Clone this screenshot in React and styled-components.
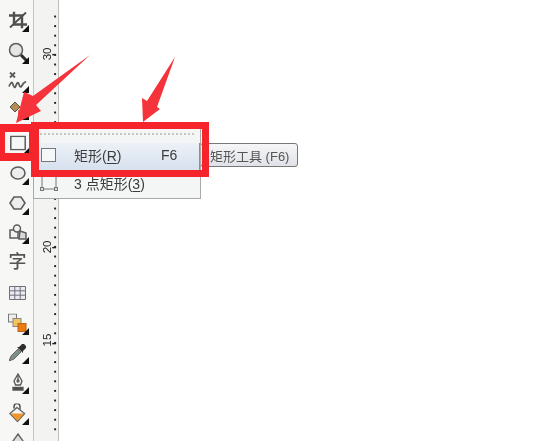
import React from 'react';
import styled, { createGlobalStyle } from 'styled-components';

const Global = createGlobalStyle`
  html, body { margin: 0; padding: 0; background: #fff; }
  body { font-family: "Liberation Sans", "Noto Sans CJK SC", sans-serif; }
`;

const Page = styled.div`
  position: relative;
  display: flex;
  width: 550px;
  height: 441px;
  overflow: hidden;
  background: #fff;
  filter: blur(0.4px);
`;

const Toolbar = styled.div`
  flex: 0 0 34px;
  height: 441px;
  padding-top: 20px;
  background: #f7f7f6;
  border-right: 1px solid #c4c4c4;
  box-sizing: border-box;
  overflow: hidden;
`;

const Tool = styled.div`
  position: relative;
  height: ${p => p.pitch}px;
  display: flex;
  align-items: flex-start;
  justify-content: center;
  padding-left: 2px;
  svg, span { display: block; transform: translateY(-50%); }
  ${p => p.more && `
    &::after {
      content: "";
      position: absolute;
      right: 4px;
      top: 5px;
      border-left: 7px solid transparent;
      border-bottom: 7px solid #111;
    }
  `}
`;

const Glyph = styled.span`
  font-size: 18px;
  font-weight: 500;
  line-height: 1;
  color: #555;
  font-family: "Noto Sans CJK SC", sans-serif;
`;

const Ruler = styled.svg`
  flex: 0 0 25px;
  width: 25px;
  height: 441px;
  box-sizing: border-box;
  background: #f3f3f2;
  border-right: 1px solid #bdbdbd;
`;

const Flyout = styled.div`
  position: absolute;
  left: 33px;
  top: 122px;
  width: 168px;
  height: 77px;
  box-sizing: border-box;
  padding-top: 10px;
  background: #f4f5f5;
  border: 1px solid #a9a9a9;
`;

const Dots = styled.div`
  height: 2px;
  margin: 0 6px 8px;
  background: repeating-linear-gradient(90deg, #c6c6c6 0 2px, transparent 2px 4px);
`;

const MenuRow = styled.div`
  display: flex;
  align-items: center;
  height: 27px;
  box-sizing: border-box;
  padding: 0 0 4px 6px;
  font-size: 14px;
  color: #3c3c3c;
  background: ${p => p.active ? 'linear-gradient(180deg, #edf1f7, #d6e1ee)' : 'transparent'};
  border-right: 1px solid ${p => p.active ? '#8b8f96' : 'transparent'};
  margin-bottom: 1px;
  svg { flex: none; margin-right: 16px; }
`;

const Label = styled.span`
  flex: 0 0 87px;
  white-space: nowrap;
  u { text-underline-offset: 2px; }
`;

const Shortcut = styled.span`
  font-size: 14px;
`;

const Tip = styled.div`
  position: absolute;
  left: 200px;
  top: 143px;
  width: 98px;
  height: 24px;
  box-sizing: border-box;
  padding-left: 9px;
  display: flex;
  align-items: center;
  font-size: 13px;
  color: #555;
  background: linear-gradient(180deg, #f6f6f7, #e0e2e8);
  border: 1px solid #777;
  border-radius: 3px;
  white-space: nowrap;
`;

const Frame = styled.div`
  position: absolute;
  left: ${p => p.x}px;
  top: ${p => p.y}px;
  width: ${p => p.w}px;
  height: ${p => p.ht}px;
  box-sizing: border-box;
  border: solid #f5252b;
  border-width: ${p => p.edge};
`;

const Arrows = styled.svg`
  position: absolute;
  left: 0;
  top: 0;
  pointer-events: none;
`;

const ink = '#5c5c5c';

const tools = [
  { pitch: 32, more: true, icon: <svg width="18" height="17" viewBox="0 0 18 17" fill="none" stroke="#505050" strokeWidth="2.400"><path d="M5 0v13h13M0 4h13v13" /><path d="M1 16L17 1" strokeWidth="1.800" /></svg> },
  { pitch: 29, more: true, icon: <svg width="20" height="20" viewBox="0 0 20 20" fill="none"><circle cx="8" cy="8" r="6.500" fill="#e6e6e6" stroke={ink} strokeWidth="1.500" /><path d="M13 13l6 6" stroke="#2c2c2c" strokeWidth="3" /></svg> },
  { pitch: 27, more: true, icon: <svg width="19" height="19" viewBox="0 0 19 19" fill="none" stroke={ink} strokeWidth="1.800"><path d="M2 1l5 5M7 1L2 6" /><path d="M1 15c2-5 3-5 4-2s2 4 3 1 2-4 3-1 2 3 3 1 2-3 4-4" /></svg> },
  { pitch: 35, more: true, icon: <svg width="18" height="18" viewBox="0 0 18 18"><path d="M1 8l5-5 5 5-5 5z" fill="#b58d4e" stroke="#555" /><rect x="9" y="11" width="6" height="6" fill="#e9675a" /></svg> },
  { pitch: 30, more: true, icon: <svg width="16" height="15" viewBox="0 0 16 15" fill="#f4f6f8" stroke={ink} strokeWidth="1.500"><rect x=".8" y=".8" width="14.400" height="13.400" /></svg> },
  { pitch: 30, more: true, icon: <svg width="16" height="14" viewBox="0 0 16 14" fill="#ededed" stroke={ink} strokeWidth="1.600"><ellipse cx="8" cy="7" rx="7" ry="6" /></svg> },
  { pitch: 29, more: true, icon: <svg width="17" height="14" viewBox="0 0 17 14" fill="#ededed" stroke={ink} strokeWidth="1.600"><path d="M5 1h7l4 6-4 6H5L1 7z" /></svg> },
  { pitch: 28, more: true, icon: <svg width="18" height="16" viewBox="0 0 18 16" fill="#f2f2f2" stroke={ink} strokeWidth="1.500"><rect x="1" y="6" width="8" height="8" /><circle cx="8" cy="4.500" r="3.500" /><path d="M11 7l6 2v6h-7z" fill="#d8d8d8" /></svg> },
  { pitch: 33, icon: <Glyph>字</Glyph> },
  { pitch: 30, icon: <svg width="17" height="14" viewBox="0 0 17 14" fill="#e9ebf0" stroke="#707078"><path d="M.5.500h16v13H.5zM.5 4.800h16M.5 9.200h16M5.800.500v13M11.200.500v13" /></svg> },
  { pitch: 29, more: true, icon: <svg width="19" height="19" viewBox="0 0 19 19"><rect x=".5" y=".5" width="8" height="8" fill="#eee" stroke="#777" /><rect x="5" y="5" width="8" height="8" fill="#f2c55c" stroke="#888" /><rect x="10" y="10" width="8" height="8" fill="#ee7a12" stroke="#b5651d" /></svg> },
  { pitch: 30, more: true, icon: <svg width="18" height="18" viewBox="0 0 18 18" fill="none"><path d="M0 18l2-5 7-7 3 3-7 7z" fill="#7d8f88" stroke="#666" /><path d="M8 4l2 0 3-3 2 0 2 2 0 2-3 3 0 2z" fill="#2e2e2e" /></svg> },
  { pitch: 31, more: true, icon: <svg width="12" height="18" viewBox="0 0 12 18" fill="#f5f5f5" stroke="#555" strokeWidth="1.300"><path d="M6 1l4 7-1.500 4h-5L2 8z" /><circle cx="6" cy="8" r="1" /><path d="M6 2v5" /><path d="M1 14.500h10v2.500H1z" fill="#444" /></svg> },
  { pitch: 28, more: true, icon: <svg width="17" height="19" viewBox="0 0 17 19" fill="none"><path d="M5 5V3a3 3 0 0 1 6 0v3" stroke="#444" strokeWidth="1.400" /><path d="M8 4l7.500 6-7 8-7.500-8z" fill="#f4f4f4" stroke="#666" strokeWidth="1.400" /><path d="M1.500 10h13.500l-6.500 7.500z" fill="#ee962c" /></svg> },
  { pitch: 20, icon: <svg width="12" height="16" viewBox="0 0 12 16" fill="#ddd" stroke="#666" strokeWidth="1.400"><path d="M6 1l5 7-5 7-5-7z" /></svg> },
];

function RulerMarks() {
  const ticks = [];
  for (let y = 8; y < 441; y += 10) {
    ticks.push(<rect key={y} x="21" y={y - 1} width="2" height="2" fill="#222" />);
  }
  const labels = [['30', 47, 48], ['20', 248, 249], ['15', 345, 349]];
  return (
    <>
      {ticks}
      {labels.map(([t, y, tick]) => (
        <g key={t}>
          <text transform={`translate(18 ${y}) rotate(-90)`} textAnchor="middle" fontSize="12" fill="#222" fontFamily="Liberation Sans, sans-serif">{t}</text>
          <rect x="19" y={tick - 1} width="4" height="1.500" fill="#222" />
        </g>
      ))}
    </>
  );
}

export default function App() {
  return (
    <Page>
      <Global />
      <Toolbar>
        {tools.map((t, i) => <Tool key={i} pitch={t.pitch} more={t.more}>{t.icon}</Tool>)}
      </Toolbar>
      <Ruler viewBox="0 0 25 441"><RulerMarks /></Ruler>

      <Tip>矩形工具 (F6)</Tip>
      <Flyout>
        <Dots />
        <MenuRow active>
          <svg width="18" height="14" viewBox="0 0 18 14" fill="#f6f7f8" stroke="#777"><rect x="1.500" y=".5" width="14" height="13" /></svg>
          <Label>矩形(<u>R</u>)</Label>
          <Shortcut>F6</Shortcut>
        </MenuRow>
        <MenuRow>
          <svg width="18" height="16" viewBox="0 0 18 16" fill="none" stroke="#777"><path d="M2 0v13M16 0v13M2 14h14" /><rect x=".5" y="12.500" width="3" height="3" fill="#ddd" /><rect x="14.500" y="12.500" width="3" height="3" fill="#ddd" /></svg>
          <Label>3 点矩形(<u>3</u>)</Label>
        </MenuRow>
      </Flyout>

      <Frame x={31} y={122} w={178} ht={55} edge="7px 7px 7px 8px" />
      <Frame x={0} y={124} w={32} ht={37} edge="8px 3px 8px 5px" />

      <Arrows width="550" height="441" viewBox="0 0 550 441">
        <path d="M90 55L33 96 24 92 16 123 41 111 36 105z" fill="#f5333a" />
        <path d="M175 57L157 107 160 109 143 122 142 98 147 101z" fill="#f5333a" />
      </Arrows>
    </Page>
  );
}
